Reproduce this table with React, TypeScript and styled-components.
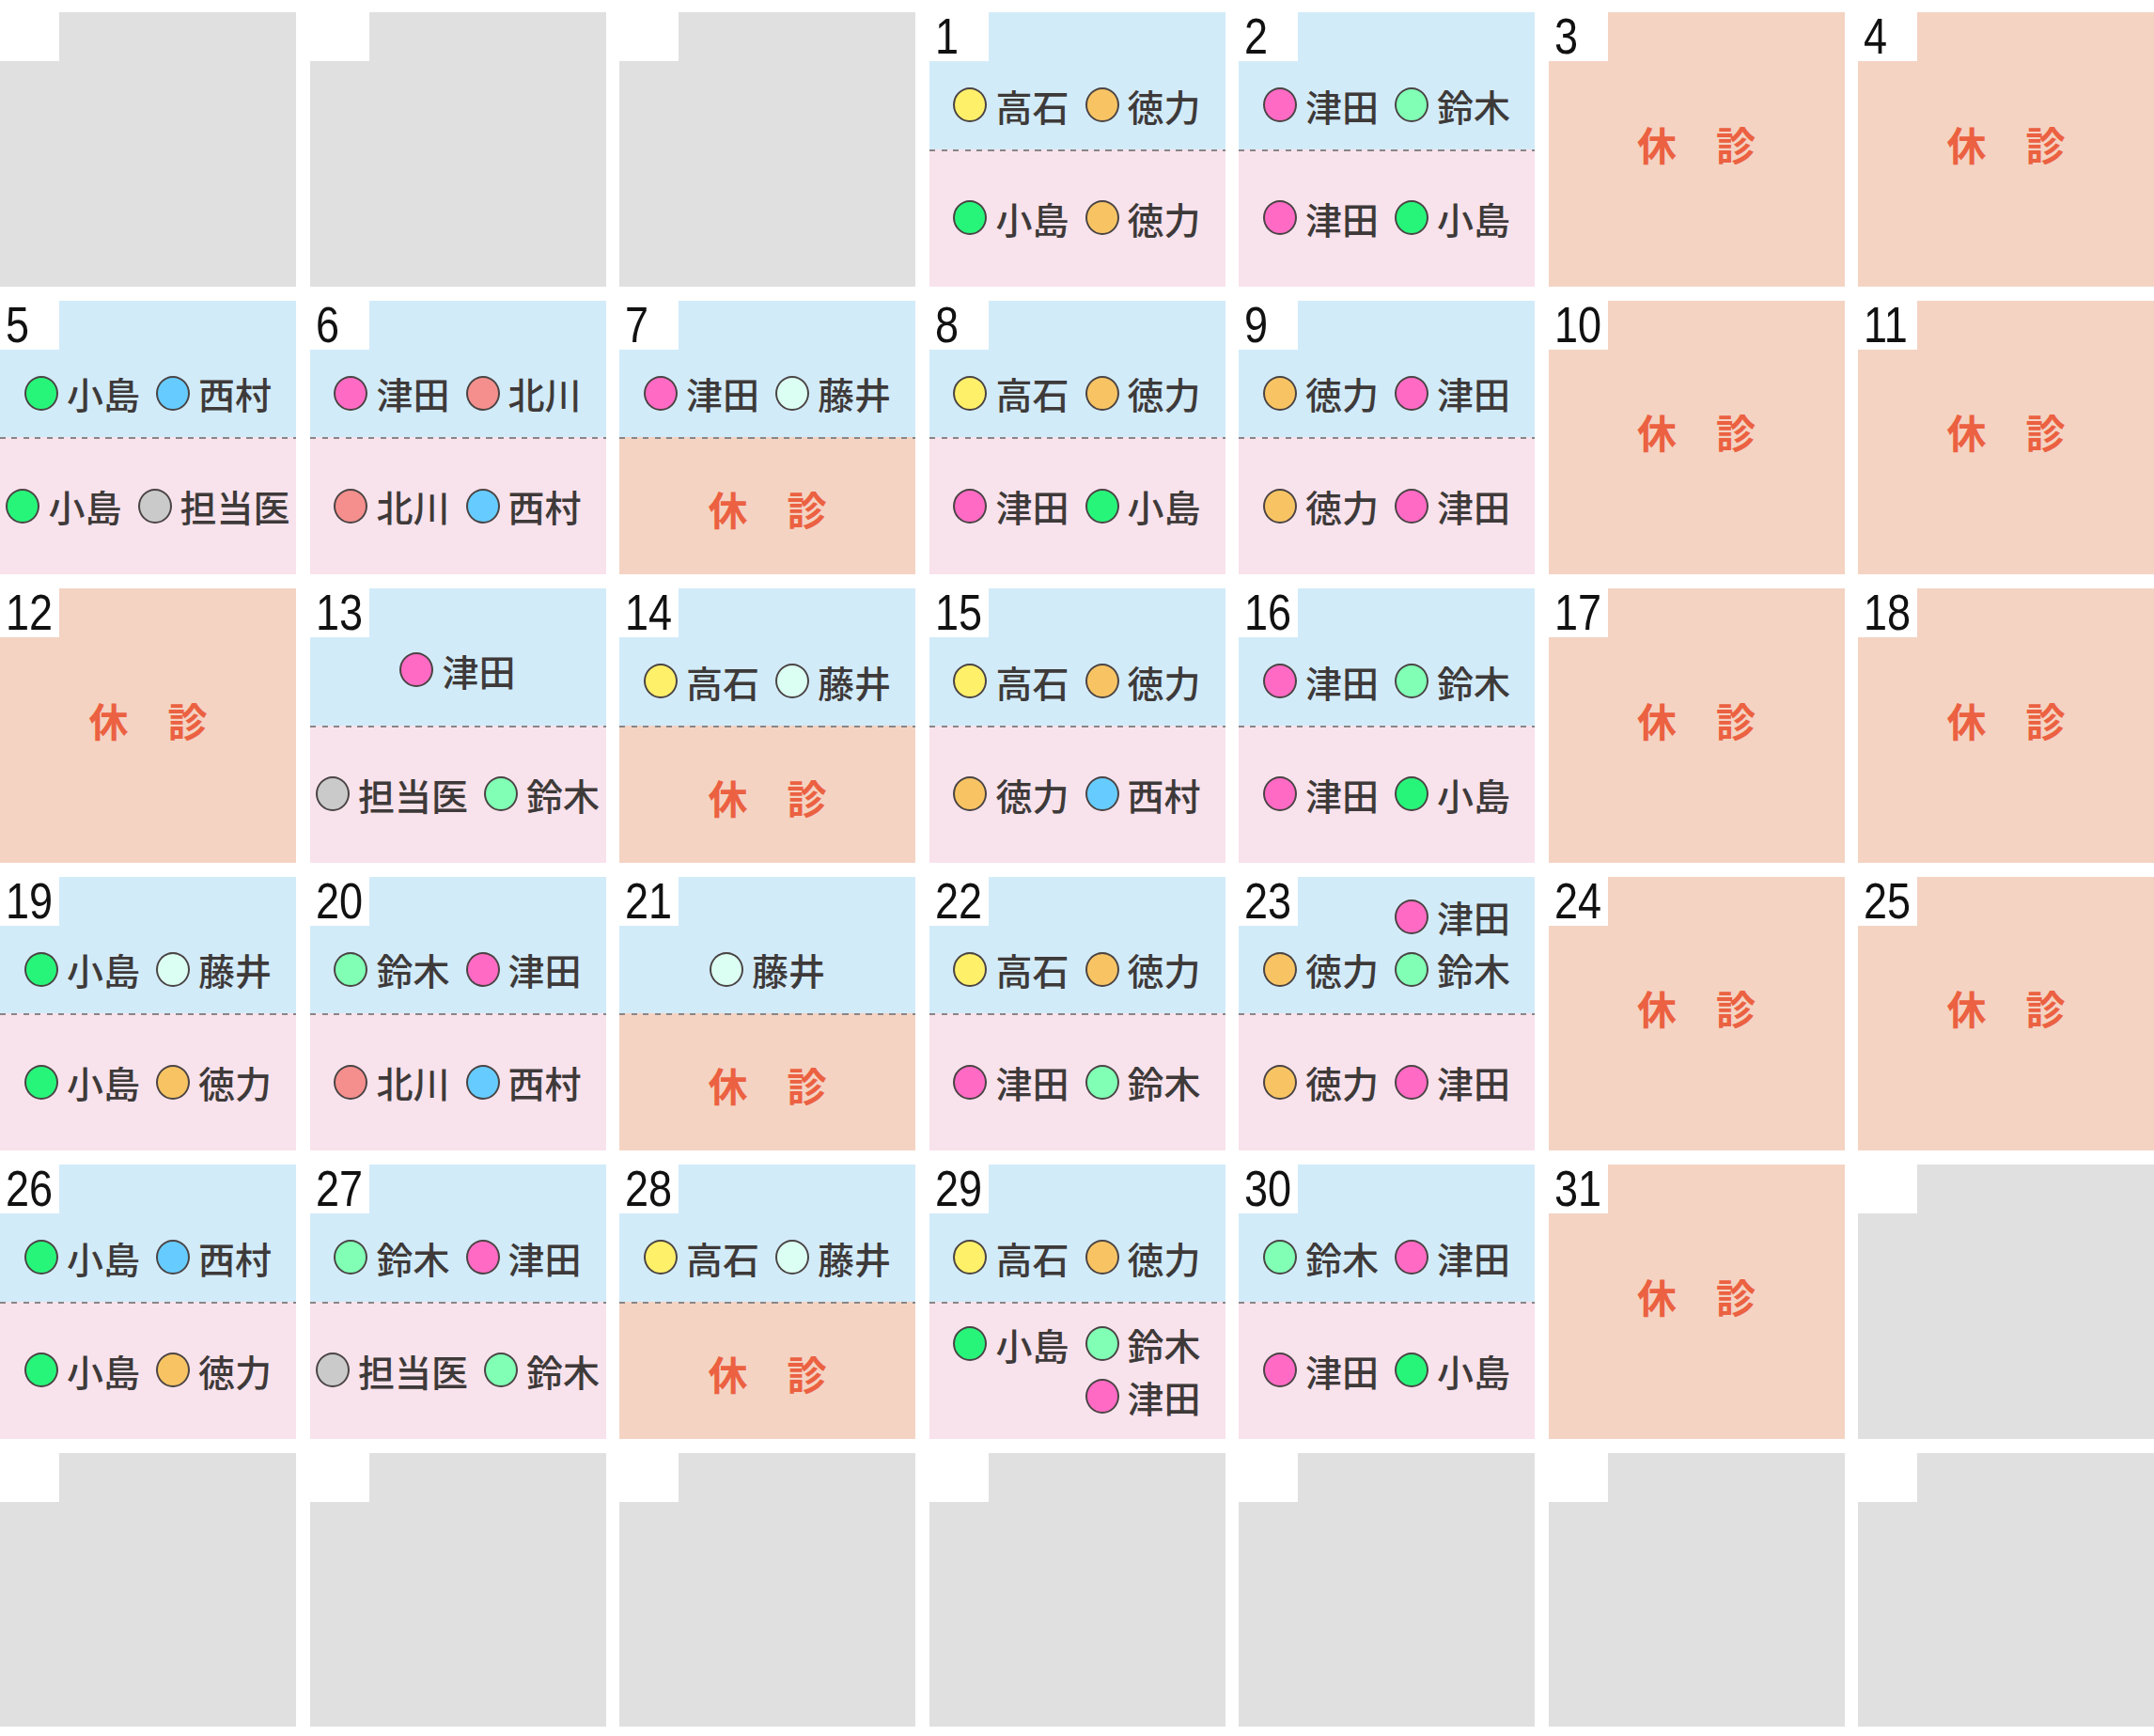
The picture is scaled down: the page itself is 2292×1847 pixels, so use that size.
import React from "react";
import styled, { createGlobalStyle } from "styled-components";

const GlobalStyle = createGlobalStyle`
  html, body {
    margin: 0;
    padding: 0;
    background: #fff;
  }
  body {
    font-family: "Noto Sans CJK JP", "Noto Sans", sans-serif;
  }
`;

const DOCTOR_COLORS: Record<string, string> = {
	高石: "#fff06a",
	徳力: "#f8c463",
	津田: "#ff6ac4",
	鈴木: "#80ffb5",
	小島: "#27f57a",
	西村: "#66ccff",
	北川: "#f48f8d",
	藤井: "#dcfff3",
	担当医: "#cacaca",
};

type HalfData = { lines?: string[][]; closed?: boolean; raise?: number };
type Day =
	| { kind: "empty" }
	| { kind: "closed"; day: number }
	| { kind: "split"; day: number; am: HalfData; pm: HalfData };

const off: HalfData = { closed: true };
const one = (...names: string[]): HalfData => ({ lines: [names] });

const DAYS: Day[] = [
	{ kind: "empty" },
	{ kind: "empty" },
	{ kind: "empty" },
	{ kind: "split", day: 1, am: one("高石", "徳力"), pm: one("小島", "徳力") },
	{ kind: "split", day: 2, am: one("津田", "鈴木"), pm: one("津田", "小島") },
	{ kind: "closed", day: 3 },
	{ kind: "closed", day: 4 },

	{ kind: "split", day: 5, am: one("小島", "西村"), pm: one("小島", "担当医") },
	{ kind: "split", day: 6, am: one("津田", "北川"), pm: one("北川", "西村") },
	{ kind: "split", day: 7, am: one("津田", "藤井"), pm: off },
	{ kind: "split", day: 8, am: one("高石", "徳力"), pm: one("津田", "小島") },
	{ kind: "split", day: 9, am: one("徳力", "津田"), pm: one("徳力", "津田") },
	{ kind: "closed", day: 10 },
	{ kind: "closed", day: 11 },

	{ kind: "closed", day: 12 },
	{ kind: "split", day: 13, am: { lines: [["津田"]], raise: 12 }, pm: one("担当医", "鈴木") },
	{ kind: "split", day: 14, am: one("高石", "藤井"), pm: off },
	{ kind: "split", day: 15, am: one("高石", "徳力"), pm: one("徳力", "西村") },
	{ kind: "split", day: 16, am: one("津田", "鈴木"), pm: one("津田", "小島") },
	{ kind: "closed", day: 17 },
	{ kind: "closed", day: 18 },

	{ kind: "split", day: 19, am: one("小島", "藤井"), pm: one("小島", "徳力") },
	{ kind: "split", day: 20, am: one("鈴木", "津田"), pm: one("北川", "西村") },
	{ kind: "split", day: 21, am: one("藤井"), pm: off },
	{ kind: "split", day: 22, am: one("高石", "徳力"), pm: one("津田", "鈴木") },
	{
		kind: "split",
		day: 23,
		am: { lines: [["津田"], ["徳力", "鈴木"]] },
		pm: one("徳力", "津田"),
	},
	{ kind: "closed", day: 24 },
	{ kind: "closed", day: 25 },

	{ kind: "split", day: 26, am: one("小島", "西村"), pm: one("小島", "徳力") },
	{ kind: "split", day: 27, am: one("鈴木", "津田"), pm: one("担当医", "鈴木") },
	{ kind: "split", day: 28, am: one("高石", "藤井"), pm: off },
	{
		kind: "split",
		day: 29,
		am: one("高石", "徳力"),
		pm: { lines: [["小島", "鈴木"], ["津田"]] },
	},
	{ kind: "split", day: 30, am: one("鈴木", "津田"), pm: one("津田", "小島") },
	{ kind: "closed", day: 31 },
	{ kind: "empty" },

	{ kind: "empty" },
	{ kind: "empty" },
	{ kind: "empty" },
	{ kind: "empty" },
	{ kind: "empty" },
	{ kind: "empty" },
	{ kind: "empty" },
];

const BLUE = "#d2ebf9";
const PINK = "#f8e2ec";
const PEACH = "#f4d3c3";
const GRAY = "#e0e0e0";

const Calendar = styled.div`
	display: grid;
	grid-template-columns: repeat(7, 1fr);
	grid-auto-rows: 291.5px;
	column-gap: 14.5px;
	row-gap: 15px;
	padding-top: 13px;
`;

const Cell = styled.div<{ $tone: "empty" | "closed" | "split" }>`
	position: relative;
	display: grid;
	grid-template-rows: ${(p) => (p.$tone === "split" ? "1fr 1fr" : "1fr")};
	min-height: 0;
	background-color: ${(p) =>
		p.$tone === "empty" ? GRAY : p.$tone === "closed" ? PEACH : "transparent"};
`;

const Badge = styled.div`
	position: absolute;
	top: 0;
	left: 0;
	z-index: 1;
	width: 63px;
	height: 52px;
	box-sizing: border-box;
	padding-left: 6px;
	background: #fff;
	color: #111;
	font-family: "Liberation Sans", Arial, sans-serif;
	font-size: 53px;
	line-height: 52px;
	white-space: nowrap;
`;

const DayNumber = styled.span`
	display: inline-block;
	transform: scaleX(0.85);
	transform-origin: 0 50%;
`;

const Half = styled.div<{ $part: "am" | "pm"; $closed: boolean; $raise: number }>`
	display: flex;
	min-height: 0;
	box-sizing: border-box;
	justify-content: center;
	align-items: ${(p) => (p.$part === "am" && !p.$closed ? "flex-end" : "center")};
	padding-bottom: ${(p) => (p.$part === "am" && !p.$closed ? 19 + p.$raise : 0)}px;
	background-color: ${(p) => (p.$closed ? PEACH : p.$part === "am" ? BLUE : PINK)};
	background-image: ${(p) =>
		p.$part === "pm"
			? "repeating-linear-gradient(to right, #8a8585 0 6px, transparent 6px 12.5px)"
			: "none"};
	background-size: 100% 3px;
	background-position: 0 -1px;
	background-repeat: no-repeat;
`;

const ClosedMark = styled.div<{ $whole?: boolean }>`
	display: flex;
	align-items: center;
	justify-content: center;
	padding-bottom: ${(p) => (p.$whole ? 12 : 0)}px;
	padding-top: ${(p) => (p.$whole ? 0 : 6)}px;
	color: #eb6141;
	font-size: 42px;
	font-weight: 700;
	line-height: 1;
`;

const Stack = styled.div`
	display: flex;
	flex-direction: column;
	align-items: flex-end;
`;

const Line = styled.div`
	display: flex;
	gap: 17px;
`;

const Entry = styled.span`
	display: inline-flex;
	align-items: center;
	gap: 9px;
	color: #3e3a39;
	font-size: 39px;
	font-weight: 500;
	line-height: 56px;
	white-space: nowrap;
`;

const Dot = styled.span<{ $color: string }>`
	width: 36px;
	height: 37px;
	box-sizing: border-box;
	border-radius: 50%;
	border: 2px solid #4a4444;
	background: ${(p) => p.$color};
	flex: none;
`;

function Closed({ whole }: { whole?: boolean }) {
	return <ClosedMark $whole={whole}>休　診</ClosedMark>;
}

function Shift({ part, data }: { part: "am" | "pm"; data: HalfData }) {
	return (
		<Half $part={part} $closed={!!data.closed} $raise={data.raise ?? 0}>
			{data.closed ? (
				<Closed />
			) : (
				<Stack>
					{data.lines?.map((line, i) => (
						<Line key={i}>
							{line.map((name) => (
								<Entry key={name}>
									<Dot $color={DOCTOR_COLORS[name]} />
									{name}
								</Entry>
							))}
						</Line>
					))}
				</Stack>
			)}
		</Half>
	);
}

function DayCell({ data }: { data: Day }) {
	if (data.kind === "empty") {
		return (
			<Cell $tone="empty">
				<Badge />
			</Cell>
		);
	}
	if (data.kind === "closed") {
		return (
			<Cell $tone="closed">
				<Badge>
					<DayNumber>{data.day}</DayNumber>
				</Badge>
				<Closed whole />
			</Cell>
		);
	}
	return (
		<Cell $tone="split">
			<Badge>
				<DayNumber>{data.day}</DayNumber>
			</Badge>
			<Shift part="am" data={data.am} />
			<Shift part="pm" data={data.pm} />
		</Cell>
	);
}

export default function App() {
	return (
		<>
			<GlobalStyle />
			<Calendar>
				{DAYS.map((d, i) => (
					<DayCell key={i} data={d} />
				))}
			</Calendar>
		</>
	);
}
